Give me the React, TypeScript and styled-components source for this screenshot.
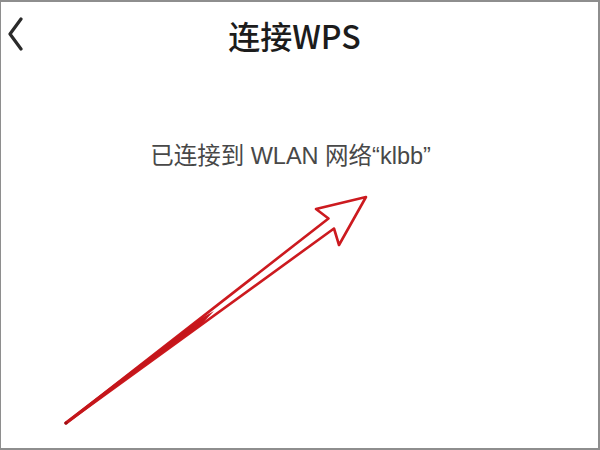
import React from "react";
import styled, { createGlobalStyle } from "styled-components";

const Global = createGlobalStyle`
  html, body { margin: 0; padding: 0; background: #fff; }
  * { box-sizing: border-box; }
`;

const Frame = styled.div`
  position: relative;
  width: 600px;
  height: 450px;
  border: 2px solid #8e8e8e;
  border-left-width: 1px;
  background: #fff;
  overflow: hidden;
  font-family: "Liberation Sans", "Noto Sans CJK SC", sans-serif;
`;

const Header = styled.header`
  display: grid;
  grid-template-columns: 40px 1fr 40px;
  align-items: center;
  height: 64px;
  padding-right: 10px;
`;

const BackButton = styled.div`
  display: flex;
  align-items: center;
  justify-content: flex-start;
  padding-left: 4px;
`;

const Title = styled.h1`
  margin: 0;
  text-align: center;
  font-family: "Noto Sans CJK SC", "Noto Sans", sans-serif;
  font-size: 32px;
  font-weight: 500;
  color: #1c1c1c;
  line-height: 1;
  padding-top: 2px;
`;

const Status = styled.p`
  margin: 76px 0 0;
  text-align: center;
  padding-right: 18px;
  font-size: 23.5px;
  color: #484848;
  line-height: 1.2;
`;

const Overlay = styled.svg`
  position: absolute;
  left: -1px;
  top: -2px;
  pointer-events: none;
`;

export default function App() {
  return (
    <>
      <Global />
      <Frame>
        <Header>
          <BackButton>
            <svg width="20" height="34" viewBox="0 0 20 34">
              <path d="M16 2 L5 17 L16 32" fill="none" stroke="#2a2a2a" strokeWidth="3.2" strokeLinecap="round" strokeLinejoin="round" />
            </svg>
          </BackButton>
          <Title>连接WPS</Title>
          <div />
        </Header>
        <Status>已连接到 WLAN 网络“klbb”</Status>
        <Overlay width="600" height="450" viewBox="0 0 600 450">
          <polygon
            points="366,197 339,245 334,228.5 66,423 328.5,218.5 316,209"
            fill="#ffffff"
            stroke="#cc1a1f"
            strokeWidth="2.6"
            strokeLinejoin="round"
          />
          <polygon points="66,423 197,320.8 214,311 200,326 " fill="#c8161b" />
          <path d="M66 423 L192 327" stroke="#c4161b" strokeWidth="3.4" strokeLinecap="round" />
          <circle cx="66" cy="423" r="1.6" fill="#9a1015" />
        </Overlay>
      </Frame>
    </>
  );
}
